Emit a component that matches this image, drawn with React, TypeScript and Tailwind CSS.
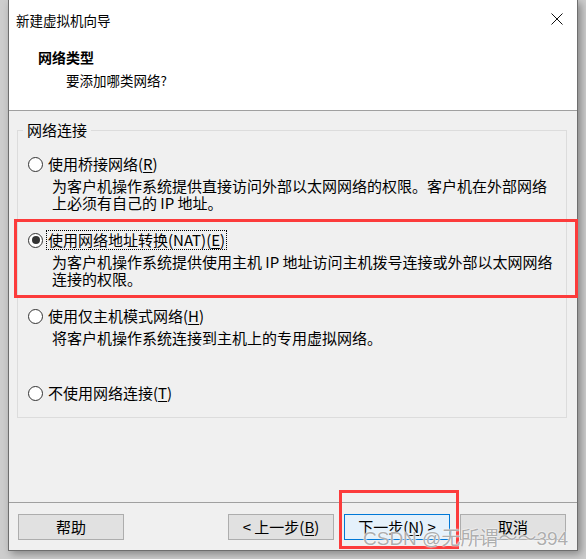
import React from "react";

const cjk = "font-['Microsoft_YaHei','Noto_Sans_CJK_SC',sans-serif]";

type Option = {
  pre: string;
  key: string;
  post: string;
  desc: string[];
  checked?: boolean;
};

const options: Option[] = [
  {
    pre: "使用桥接网络(",
    key: "R",
    post: ")",
    desc: ["为客户机操作系统提供直接访问外部以太网网络的权限。客户机在外部网络", "上必须有自己的 IP 地址。"],
  },
  {
    pre: "使用网络地址转换(NAT)(",
    key: "E",
    post: ")",
    desc: ["为客户机操作系统提供使用主机 IP 地址访问主机拨号连接或外部以太网网络", "连接的权限。"],
    checked: true,
  },
  {
    pre: "使用仅主机模式网络(",
    key: "H",
    post: ")",
    desc: ["将客户机操作系统连接到主机上的专用虚拟网络。"],
  },
  {
    pre: "不使用网络连接(",
    key: "T",
    post: ")",
    desc: [],
  },
];

function Radio({ checked }: { checked?: boolean }) {
  return (
    <span className="flex h-[15px] w-[15px] shrink-0 items-center justify-center rounded-full border border-[#333] bg-white">
      {checked && <span className="h-[8px] w-[8px] rounded-full bg-[#333]" />}
    </span>
  );
}

function Btn({ children, primary }: { children: React.ReactNode; primary?: boolean }) {
  return (
    <div
      className={`flex h-[26px] w-[106px] items-center justify-center border text-[15px] leading-[20px] text-black ${
        primary ? "border-[#0078d7] bg-[#e5f1fb]" : "border-[#adadad] bg-[#e1e1e1]"
      }`}
    >
      {children}
    </div>
  );
}

export default function App() {
  return (
    <div className={`relative h-[559px] w-[586px] overflow-hidden bg-[#cdcdcd] ${cjk} text-black`}>
      {/* dialog window */}
      <div className="ml-[8px] flex h-[551px] w-[570px] flex-col border-x border-b border-[#6e6e6e] bg-[#f0f0f0] shadow-[3px_3px_8px_rgba(0,0,0,0.35)]">
        {/* header */}
        <div className="h-[111px] shrink-0 border-b border-[#a0a0a0] bg-white pt-[10px]">
          <div className="flex h-[20px] items-center justify-between pl-[7px] pr-[14px]">
            <span className="text-[13.5px] leading-[20px]">新建虚拟机向导</span>
            <svg width="12" height="12" viewBox="0 0 12 12" className="mt-[-2px]">
              <path d="M0.5 0.5 L11.5 11.5 M11.5 0.5 L0.5 11.5" stroke="#111" strokeWidth="1" fill="none" />
            </svg>
          </div>
          <div className="mt-[17px] pl-[29px] text-[14px] font-bold leading-[20px]">网络类型</div>
          <div className="mt-[3px] pl-[57px] text-[13.5px] leading-[20px]">要添加哪类网络?</div>
        </div>

        {/* body */}
        <div className="flex-1">
          <fieldset className="ml-[8px] mr-[10px] mt-[9px] border border-[#dcdcdc] pb-[14px]">
            <legend className="ml-[5px] px-[4px] text-[15px] leading-[20px]">网络连接</legend>
            <div className="mt-[14px] flex flex-col">
              {options.map((o, i) => (
                <div key={o.key} className={i === 0 ? "" : i === 3 ? "mt-[37px]" : "mt-[19px]"}>
                  <div className="flex h-[20px] items-center pl-[10px]">
                    <Radio checked={o.checked} />
                    <span
                      className={`ml-[3px] border px-[1px] text-[15px] leading-[18px] ${
                        o.checked ? "border-dotted border-black" : "border-transparent"
                      }`}
                    >
                      {o.pre}
                      <span className="underline underline-offset-2">{o.key}</span>
                      {o.post}
                    </span>
                  </div>
                  {o.desc.length > 0 && (
                    <div className="mt-[3px] pl-[34px] text-[15px] leading-[17px]">
                      {o.desc.map((d) => (
                        <div key={d} className="whitespace-nowrap">
                          {d}
                        </div>
                      ))}
                    </div>
                  )}
                </div>
              ))}
            </div>
          </fieldset>
        </div>

        {/* footer */}
        <div className="flex h-[48px] shrink-0 items-start border-t border-[#a0a0a0] pl-[9px] pr-[11px] pt-[11px]">
          <Btn>帮助</Btn>
          <div className="ml-auto flex gap-[10px]">
            <Btn>
              &lt; 上一步(<span className="underline underline-offset-2">B</span>)
            </Btn>
            <Btn primary>
              下一步(<span className="underline underline-offset-2">N</span>) &gt;
            </Btn>
            <Btn>取消</Btn>
          </div>
        </div>
      </div>

      {/* red highlight annotations */}
      <div className="absolute left-[14px] top-[219px] h-[79px] w-[564px] border-[3px] border-[#fc3b3b]" />
      <div className="absolute left-[339px] top-[490px] h-[59px] w-[120px] border-[3px] border-[#fc3b3b]" />

      {/* watermark */}
      <div className="absolute left-[363px] top-[527px] whitespace-nowrap font-['Liberation_Sans','Noto_Sans_CJK_SC',sans-serif] text-[19px] leading-[24px] text-[#a3a3a3]/90 [text-shadow:0_0_2px_#fff,0_0_1px_#fff]">
        CSDN @无所谓～～394
      </div>
    </div>
  );
}
